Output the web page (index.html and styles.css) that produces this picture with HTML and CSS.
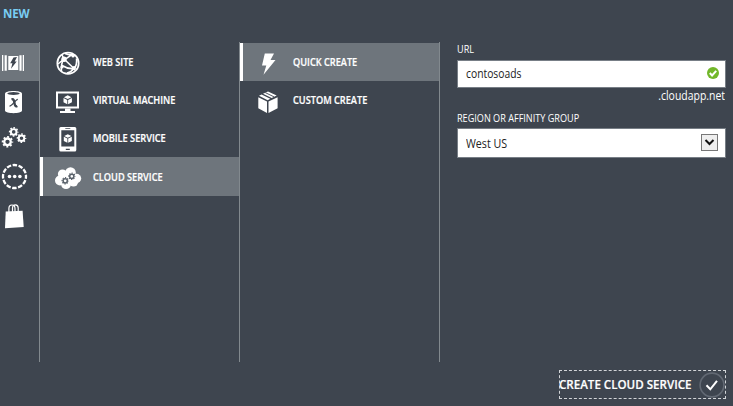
FILE: index.html
```html
<!DOCTYPE html>
<html lang="en">
<head>
<meta charset="utf-8">
<title>New</title>
<link rel="stylesheet" href="styles.css">
</head>
<body>
<svg class="defs" width="0" height="0" aria-hidden="true">
  <defs>
    <g id="gear">
      <circle r="3.3" fill="none" stroke="currentColor" stroke-width="2.3"/>
      <circle r="4.9" fill="none" stroke="currentColor" stroke-width="1.7" stroke-dasharray="1.92 1.928" stroke-dashoffset="0.96"/>
    </g>
    <g id="cube">
      <path d="M0-4.3 3.6-2.5 0-.7-3.6-2.5ZM-4-1.7-.4.1V4.3L-4 2.4ZM4-1.7.4.1V4.3L4 2.4Z"/>
    </g>
  </defs>
</svg>
<header class="title">NEW</header>
<main class="drawer">
  <nav class="rail">
    <a class="rail-item selected">
      <svg class="rail-icon" viewBox="0 0 38 38"><path d="M2 12h1.3v16H2zM4.6 12.3h2.2v15.4H4.6zM8.3 13h10v14h-10zM19.4 12.3h2.2v15.4h-2.2zM22.7 12H24v16h-1.300z"/><path class="cut" d="M13.500 14.500 17 14l-2.300 4.500h2L11 25.700l1.400-5.400h-2.200z"/></svg>
    </a>
    <a class="rail-item">
      <svg class="rail-icon" viewBox="0 0 38 38"><path d="M5 12.500C5 9 22 9 22 12.500V29.500C22 33 5 33 5 29.500Z"/><ellipse class="cut" cx="13.500" cy="12.500" rx="6.200" ry="1.500"/><path class="cut-line" stroke-width="2.300" d="M11.500 18.500c2-.9 2.700 1 3 3.500s1 4 2.800 2.900"/><path class="cut-line" stroke-width="1.300" d="M17.800 18.300c-2.300.2-5.800 6.800-8.300 6.800"/></svg>
    </a>
    <a class="rail-item">
      <svg class="rail-icon" viewBox="0 0 38 38"><use href="#gear" transform="translate(13.700 12.900) scale(.84)"/><use href="#gear" transform="translate(7.500 22.800)"/><use href="#gear" transform="translate(21.500 19.200) scale(.84)"/></svg>
    </a>
    <a class="rail-item">
      <svg class="rail-icon" viewBox="0 0 38 38"><circle class="line" cx="14.500" cy="18.500" r="11.500" stroke-width="2.300" stroke-dasharray="4.500 1.522" stroke-dashoffset="2.250"/><circle cx="9.500" cy="18.500" r="1.800"/><circle cx="14.700" cy="18.500" r="1.800"/><circle cx="19.900" cy="18.500" r="1.800"/></svg>
    </a>
    <a class="rail-item">
      <svg class="rail-icon" viewBox="0 0 38 38"><path d="M5.700 15.500 22.600 14.800 23.700 31 5 32.200Z"/><path class="line" stroke-width="1.200" d="M8.900 17v-4.500c0-4.700 6.100-4.700 6.100 0V16M12.500 16v-4c0-4.300 5.700-4.200 5.700 0v4"/></svg>
    </a>
  </nav>
  <section class="column">
    <a class="item">
      <svg class="icon" viewBox="0 0 38 38"><g class="line"><circle cx="18" cy="20.200" r="10.700" stroke-width="1.700"/><path stroke-width="1.600" d="M15 10.500c3 1.500 8 1.500 10.500 2M14 16 24 25.500M14 16c4-.5 5-3.500 9-4.500M14 16c-3 4-3 8-2.500 12.500M14 16l-2-4M8 21l6-5M24 25.500c-4 .5-8-.5-12-3M24 25.500c2.500-2.500 3-6 2.500-10M24 25.500l1 2M17 30c3-.5 5-2 7-4.500"/></g><circle cx="14" cy="16.200" r="2.700"/><circle cx="24" cy="25" r="2"/><circle cx="23" cy="13" r="1.600"/><circle cx="12" cy="24" r="1.600"/></svg>
      <span class="label">WEB SITE</span>
    </a>
    <a class="item">
      <svg class="icon" viewBox="0 0 38 38"><rect class="line" x="7" y="11.500" width="21" height="15" stroke-width="2"/><path d="M15 27.500h5.500v2.500H25v2H10v-2h5z"/><use href="#cube" transform="translate(17.700 18.800) scale(1.050)"/></svg>
      <span class="label">VIRTUAL MACHINE</span>
    </a>
    <a class="item">
      <svg class="icon" viewBox="0 0 38 38"><path fill-rule="evenodd" d="M10.800 8h14q1.500 0 1.500 1.500v21.500q0 1.500-1.500 1.500h-14q-1.500 0-1.500-1.500V9.500Q9.300 8 10.800 8ZM11.300 11.300v16.200h13V11.300ZM15.300 9v.8h5V9ZM15.800 29.700v1.200h4v-1.200Z"/><use href="#cube" transform="translate(17.800 19.500)"/></svg>
      <span class="label">MOBILE SERVICE</span>
    </a>
    <a class="item selected marked">
      <svg class="icon" viewBox="0 0 38 38"><g><circle cx="10" cy="22.500" r="5"/><circle cx="12.500" cy="16" r="4.600"/><circle cx="20.500" cy="14.500" r="5.300"/><circle cx="26.500" cy="20.500" r="4.700"/><circle cx="23.500" cy="24" r="4.600"/><circle cx="16" cy="26.200" r="4.900"/><circle cx="18" cy="20" r="7"/></g><g class="cloud-gears"><use href="#gear" transform="translate(15.200 22.800) scale(.64)"/><use href="#gear" transform="translate(21.800 18.300) scale(.64)"/></g></svg>
      <span class="label">CLOUD SERVICE</span>
    </a>
  </section>
  <section class="column">
    <a class="item selected marked">
      <svg class="icon" viewBox="0 0 38 38"><path d="M14.800 10.500H24L20.500 17H25.500L13.500 31.800 16.300 22.500H12Z"/></svg>
      <span class="label">QUICK CREATE</span>
    </a>
    <a class="item">
      <svg class="icon" viewBox="0 0 38 38"><path d="M8.300 16.200 17 20.600V32L8.300 27.300ZM27.600 16.200 18.500 20.600V32L27.600 27.300ZM9 14.800 11.600 13.500 20.300 17.800 17.700 19.200ZM13 12.800 18 10.400 26.700 14.600 21.700 17.100Z"/><path class="cut-line" stroke-width=".9" d="m15.300 11.600 8.800 4.300"/></svg>
      <span class="label">CUSTOM CREATE</span>
    </a>
  </section>
  <form class="form">
    <label class="caption">URL</label>
    <div class="field url-field">
      <span class="value">contosoads</span>
      <svg class="valid" viewBox="0 0 12 12"><circle cx="6" cy="6" r="6"/><path d="m2.800 6 2.300 2.500 4.100-4.600"/></svg>
    </div>
    <div class="suffix">.cloudapp.net</div>
    <label class="caption region">REGION OR AFFINITY GROUP</label>
    <div class="field select">
      <span class="option">West US</span>
      <span class="arrow"><svg viewBox="0 0 15 15"><path d="m3.500 5 4 4 4-4"/></svg></span>
    </div>
  </form>
</main>
<footer class="footer">
  <button class="create"><span>CREATE CLOUD SERVICE</span>
    <svg class="tick" viewBox="0 0 26 26"><circle cx="13" cy="13" r="11.900"/><path d="m7.500 13.300 3.800 4 6.700-8.500"/></svg>
  </button>
</footer>
</body>
</html>
```

FILE: styles.css
```css
* { box-sizing: border-box; }
body {
  margin: 0;
  width: 733px;
  height: 406px;
  overflow: hidden;
  display: flex;
  flex-direction: column;
  background: #3e454f;
  color: #fff;
  font-family: "Open Sans", "Noto Sans", sans-serif;
  font-size: 10px;
}
.defs { position: absolute; }
span { white-space: nowrap; }
svg { fill: currentColor; flex: none; }
.title {
  height: 42px;
  padding: 5px 3px 0;
  font-size: 11.5px;
  line-height: 18px;
  font-weight: 700;
  letter-spacing: -.1px;
  color: #79cdf3;
}
.drawer { display: flex; height: 320px; }
.rail { width: 40px; border-right: 1px solid #82898e; }
.column { width: 200px; border-right: 1px solid #82898e; }
.rail-item, .item { display: flex; align-items: center; height: 38.330px; }
.rail, .column { padding-top: .5px; }
.rail-icon { width: 38px; height: 38px; }
.item { padding-left: 10px; }
.icon { width: 38px; height: 38px; }
.selected { background: #6e757c; }
.marked { border-left: 3px solid #fff; padding-left: 7px; }
.label { margin-left: 5px; font-weight: 600; line-height: 14px; transform: scaleX(.92); transform-origin: left; -webkit-text-stroke: .2px; }
.line, .cut-line { fill: none; stroke: #fff; }
.cut { fill: #3e454f; }
.cut-line { stroke: #3e454f; }
.cloud-gears { color: #59616a; }
.form { width: 286px; padding-left: 17px; }
.caption { display: block; height: 18px; line-height: 15px; transform: scaleX(.91); transform-origin: left; white-space: nowrap; }
.field {
  display: flex;
  align-items: center;
  justify-content: space-between;
  width: 269px;
  height: 28px;
  padding: 0 7px 0 8px;
  border: 1px solid #777e86;
  background: #fff;
  color: #222;
  font-size: 12px;
}
.value { transform: scaleX(.86); transform-origin: left; padding-bottom: 1px; }
.option { transform: scaleX(.89); transform-origin: left; }
.valid { width: 12px; height: 12px; margin: -2px -1px 0 0; fill: #72b72a; }
.valid path, .arrow path, .tick path { fill: none; stroke: #fff; stroke-width: 2; }
.suffix { height: 23px; line-height: 15px; font-size: 12px; text-align: right; width: 268px; transform: scaleX(.87); transform-origin: right; }
.region { height: 17px; line-height: 14px; }
.select { height: 30px; }
.select .arrow { margin-top: -2px; }
.arrow { display: flex; width: 17px; height: 17px; border: 1px solid #777; background: #eee; }
.arrow path { stroke: #111; }
.footer { display: flex; justify-content: flex-end; padding: 8px 7px 0 0; }
.create {
  display: flex;
  align-items: center;
  justify-content: space-between;
  width: 167px;
  height: 29px;
  padding: 0;
  border: 1px dashed #d2d5d8;
  background: none;
  color: #fff;
  font: 600 12px "Open Sans", "Noto Sans", sans-serif;
}
.create span { margin-left: -1px; transform: scaleX(.965); transform-origin: left; -webkit-text-stroke: .2px; }
.tick { width: 26px; height: 26px; margin-left: -1px; }
.tick circle { fill: none; stroke: #626973; stroke-width: 1.600; }
```
